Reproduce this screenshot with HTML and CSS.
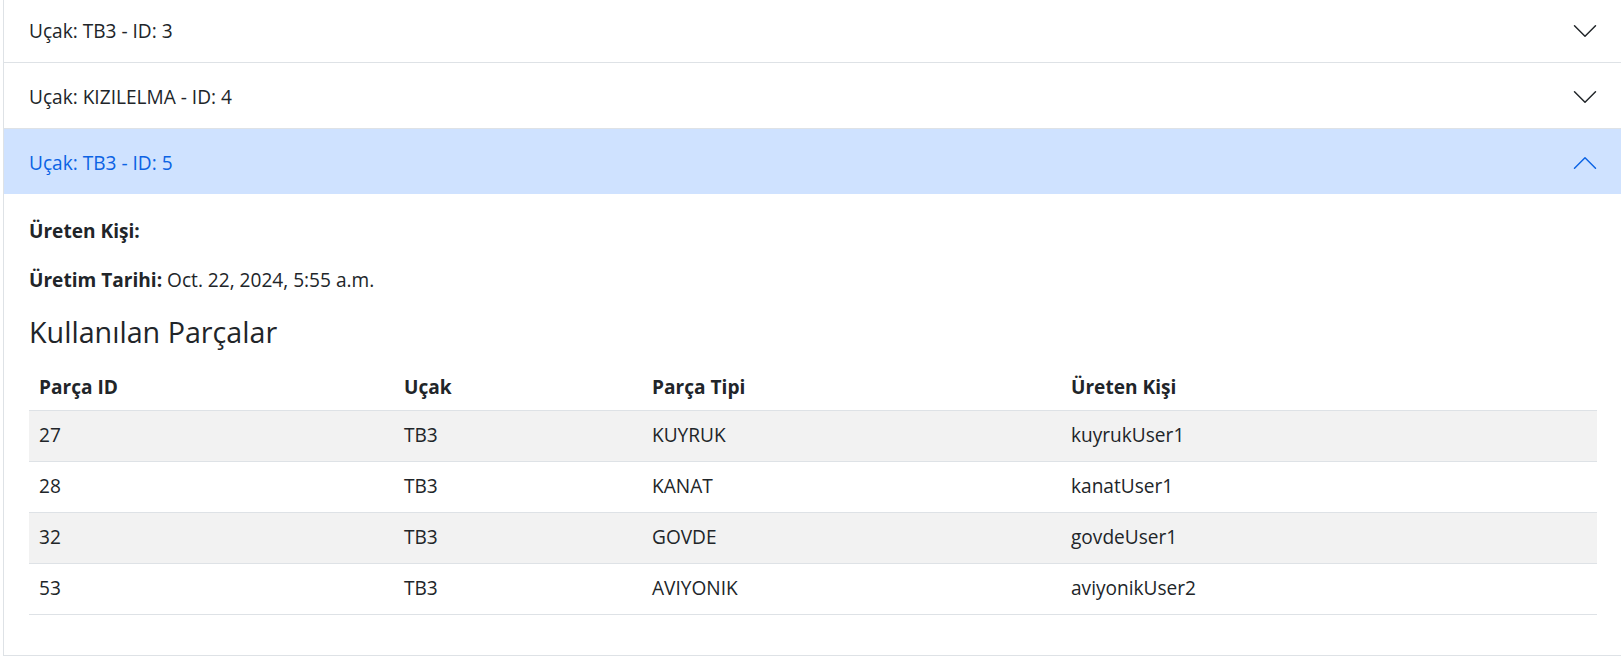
FILE: index.html
```html
<!DOCTYPE html>
<html lang="tr">
<head>
<meta charset="utf-8">
<title>Uçaklar</title>
<link rel="stylesheet" href="styles.css">
</head>
<body>
<div class="accordion">
  <div class="acc-item">
    <button class="acc-header" type="button">
      <span class="acc-title">Uçak: TB3 - ID: 3</span>
      <svg class="chev" viewBox="0 0 16 16" width="28" height="28" fill="none" stroke="currentColor" stroke-width="0.85" stroke-linecap="round" stroke-linejoin="round"><path d="M2 5L8 11L14 5"/></svg>
    </button>
  </div>
  <div class="acc-item">
    <button class="acc-header" type="button">
      <span class="acc-title">Uçak: KIZILELMA - ID: 4</span>
      <svg class="chev" viewBox="0 0 16 16" width="28" height="28" fill="none" stroke="currentColor" stroke-width="0.85" stroke-linecap="round" stroke-linejoin="round"><path d="M2 5L8 11L14 5"/></svg>
    </button>
  </div>
  <div class="acc-item">
    <button class="acc-header active" type="button">
      <span class="acc-title">Uçak: TB3 - ID: 5</span>
      <svg class="chev up" viewBox="0 0 16 16" width="28" height="28" fill="none" stroke="currentColor" stroke-width="0.85" stroke-linecap="round" stroke-linejoin="round"><path d="M2 5L8 11L14 5"/></svg>
    </button>
    <div class="acc-body">
      <p><strong>Üreten Kişi:</strong> </p>
      <p><strong>Üretim Tarihi:</strong> Oct. 22, 2024, 5:55 a.m.</p>
      <h4 class="section-title">Kullanılan Parçalar</h4>
      <table class="parts">
        <colgroup>
          <col class="c1"><col class="c2"><col class="c3"><col class="c4">
        </colgroup>
        <thead>
          <tr><th>Parça ID</th><th>Uçak</th><th>Parça Tipi</th><th>Üreten Kişi</th></tr>
        </thead>
        <tbody>
          <tr><td>27</td><td>TB3</td><td>KUYRUK</td><td>kuyrukUser1</td></tr>
          <tr><td>28</td><td>TB3</td><td>KANAT</td><td>kanatUser1</td></tr>
          <tr><td>32</td><td>TB3</td><td>GOVDE</td><td>govdeUser1</td></tr>
          <tr><td>53</td><td>TB3</td><td>AVIYONIK</td><td>aviyonikUser2</td></tr>
        </tbody>
      </table>
    </div>
  </div>
</div>
</body>
</html>
```

FILE: styles.css
```css
* { box-sizing: border-box; }

html, body {
  margin: 0;
  padding: 0;
  background: #fff;
  overflow: hidden;
}

body {
  font-family: "Open Sans", "Noto Sans", sans-serif;
  font-size: 19.1px;
  line-height: 27.6px;
  color: #212529;
}

.accordion {
  margin: -3px 0 0 3px;
  border-left: 1px solid #dee2e6;
}

.acc-item {
  border-bottom: 1px solid #dee2e6;
}

.acc-header {
  display: flex;
  align-items: center;
  justify-content: space-between;
  width: 100%;
  height: 65px;
  padding: 0 22px 0 25px;
  border: 0;
  background: #fff;
  font: inherit;
  color: #212529;
  text-align: left;
  cursor: pointer;
}

.acc-title {
  padding-top: 4px;
}

.acc-header.active {
  background: #cfe2ff;
  color: #0c63e4;
}

.chev {
  flex: 0 0 auto;
  display: block;
  margin-top: 2px;
}

.chev.up {
  transform: rotate(180deg);
}

.acc-body {
  padding: 24px 24px 22px 25px;
}

.acc-body p {
  margin: 0 0 21px;
}

.acc-body strong {
  font-weight: 700;
}

.section-title {
  margin: 3px 0 14px;
  font-size: 28.7px;
  font-weight: 500;
  line-height: 34px;
}

.parts {
  width: 100%;
  border-collapse: collapse;
  margin-bottom: 18px;
}

.parts .c1 { width: 365px; }
.parts .c2 { width: 248px; }
.parts .c3 { width: 419px; }

.parts th,
.parts td {
  padding: 11.2px 10px;
  text-align: left;
  border-bottom: 1px solid #dee2e6;
}

.parts th {
  font-weight: 700;
  padding-bottom: 8.1px;
}

.parts tbody tr:nth-child(odd) td {
  background: #f2f2f2;
}
```
